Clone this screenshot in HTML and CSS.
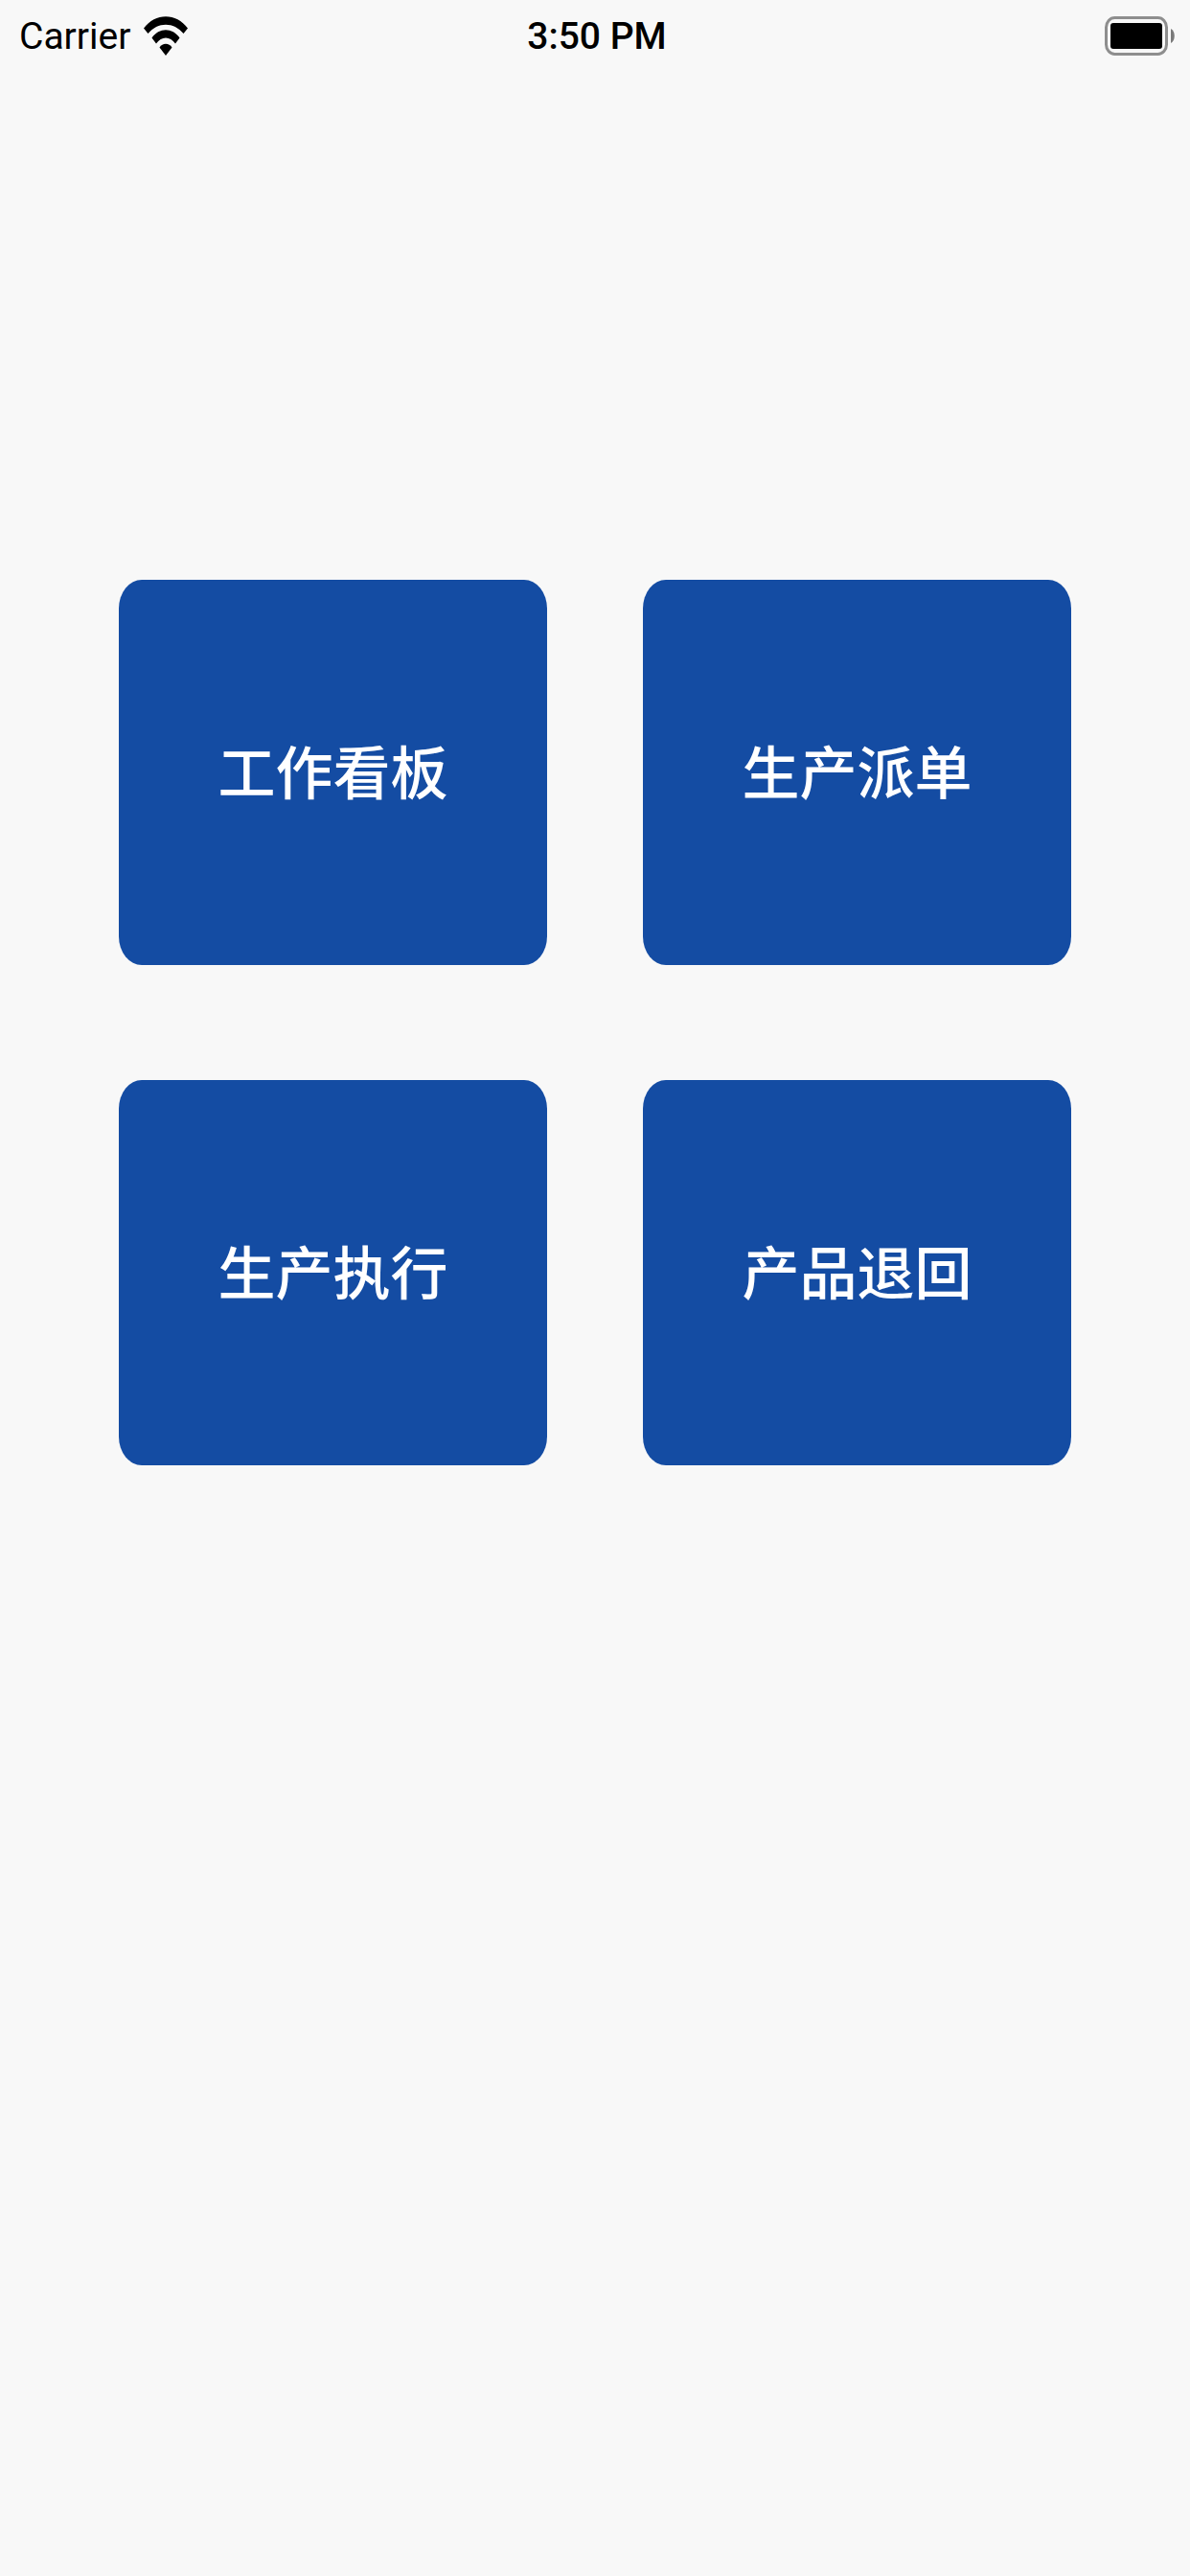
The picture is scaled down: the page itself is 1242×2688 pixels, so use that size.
FILE: index.html
```
<!DOCTYPE html>
<html lang="zh-CN">
<head>
    <meta charset="UTF-8">
    <meta name="viewport" content="width=device-width, initial-scale=1.0">
    <title>生产管理</title>
    <link rel="stylesheet" href="styles.css">
</head>
<body>
    <!-- Status bar -->
    <header class="status-bar">
        <div class="network">
            <span class="carrier">Carrier</span>
            <svg class="wifi" viewBox="0 0 46 41" aria-hidden="true">
                <path d="M0 12.500C12-4 34-4 46 12.500L41.500 18C31.500 5.500 14.500 5.500 4.500 18Z"/>
                <path d="M8.500 22.500C16 11.500 30 11.500 37.500 22.500L33 28.500C27.500 20.500 18.500 20.500 13 28.500Z"/>
                <path d="M16.500 32.500C19.500 27.500 26.500 27.500 29.500 32.500L23 41Z"/>
            </svg>
        </div>
        <div class="time">3:50 PM</div>
        <svg class="battery" viewBox="0 0 73 41" aria-hidden="true">
            <rect class="battery-case" x="1.500" y="1.500" width="63" height="38" rx="9" ry="10"/>
            <rect x="6" y="7" width="54" height="27" rx="3"/>
            <path class="battery-tip" d="M69 13C74 15 74 26 69 28Z"/>
        </svg>
    </header>

    <!-- Main menu -->
    <main class="menu">
        <button class="menu-item" type="button">工作看板</button>
        <button class="menu-item" type="button">生产派单</button>
        <button class="menu-item" type="button">生产执行</button>
        <button class="menu-item" type="button">产品退回</button>
    </main>
</body>
</html>
```
FILE: styles.css
```
*, *::before, *::after {
    box-sizing: border-box;
}

body {
    font-family: Roboto, 'Noto Sans CJK SC', sans-serif;
    margin: 0;
    min-height: 100vh;
    background: #f8f8f8;
    color: #000;
}

/* Status bar */
.status-bar {
    display: grid;
    grid-template-columns: 1fr auto 1fr;
    align-items: center;
    padding: 12px 16px 12px 20px;
    font-size: 39px;
    line-height: 48px;
}

.network {
    display: flex;
    align-items: center;
    gap: 14px;
}

.carrier,
.time {
    padding-top: 2px;
}

.time {
    font-weight: 500;
}

.wifi {
    width: 46px;
    height: 41px;
}

.battery {
    width: 73px;
    height: 41px;
    justify-self: end;
}

.battery-case {
    fill: none;
    stroke: #8e8e8e;
    stroke-width: 3;
}

.battery-tip {
    fill: #7a7a7a;
}

/* Main menu */
.menu {
    display: grid;
    grid-template-columns: 1fr 1fr;
    gap: 120px 100px;
    padding: 531px 10% 120px;
}

.menu-item {
    padding: 153px 0 159px;
    border: none;
    border-radius: 24px / 30px;
    background: #144ca3;
    color: #fff;
    font-family: 'Noto Sans CJK SC', sans-serif;
    font-size: 60px;
    font-weight: 500;
    line-height: 90px;
    cursor: pointer;
}

.menu-item:active {
    background: #103f88;
}

/* Small screens */
@media (max-width: 768px) {
    .menu {
        gap: 40px 32px;
        padding-top: 180px;
    }

    .menu-item {
        padding: 48px 0;
        font-size: 24px;
        line-height: 36px;
        border-radius: 12px;
    }
}
```
